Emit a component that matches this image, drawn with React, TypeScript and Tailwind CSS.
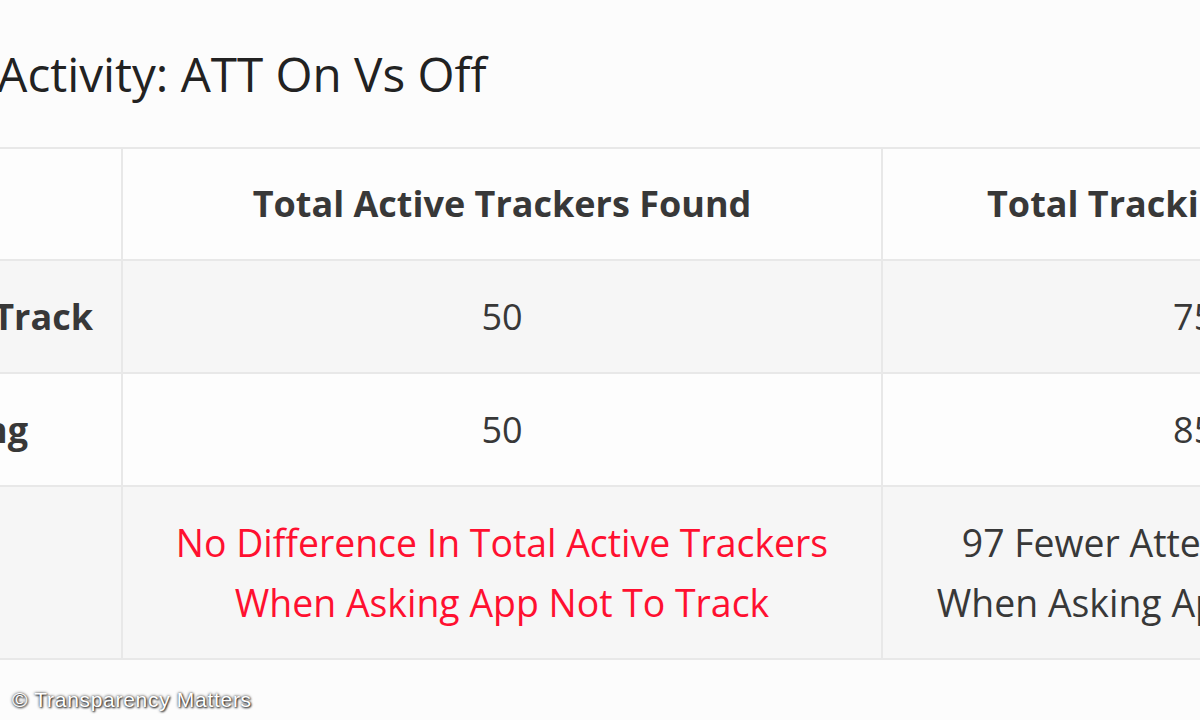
import React from "react";

type Row = {
  label: string;
  labelPad: string;
  active: string;
  attempts: string;
  shade: boolean;
};

const rows: Row[] = [
  { label: "Ask App Not To Track", labelPad: "pr-[28px]", active: "50", attempts: "753", shade: true },
  { label: "Allow Tracking", labelPad: "pr-[93px]", active: "50", attempts: "850", shade: false },
];

const App: React.FC = () => {
  return (
    <div
      className="w-[1200px] h-[720px] overflow-hidden bg-[#fcfcfc] text-[#383838] relative"
      style={{ fontFamily: '"Open Sans", "Noto Sans", sans-serif' }}
    >
      <h1 className="h-[147px] pt-[42px] -ml-[300px] pl-[98px] text-[47.6px] leading-[64px] whitespace-nowrap text-[#222]">
        Tracking Activity: ATT On Vs Off
      </h1>

      <table className="-ml-[300px] border-collapse table-fixed w-[1826px]">
        <colgroup>
          <col className="w-[422px]" />
          <col className="w-[760px]" />
          <col className="w-[644px]" />
        </colgroup>
        <thead>
          <tr className="h-[112px] bg-[#fdfdfd]">
            <th className="border-2 border-[#e8e8e8] border-l-0"></th>
            <th className="border-2 border-[#e8e8e8] text-[36px] font-bold text-center">
              Total Active Trackers Found
            </th>
            <th className="border-2 border-[#e8e8e8] text-[36px] font-bold text-center whitespace-nowrap">
              Total Tracking Attempts
            </th>
          </tr>
        </thead>
        <tbody>
          {rows.map((row) => (
            <tr
              key={row.label}
              className={row.shade ? "h-[113px] bg-[#f6f6f6]" : "h-[113px] bg-[#fdfdfd]"}
            >
              <td
                className={`border-2 border-[#e8e8e8] border-l-0 text-[36px] font-bold text-right whitespace-nowrap ${row.labelPad}`}
              >
                {row.label}
              </td>
              <td className="border-2 border-[#e8e8e8] text-[36px] text-center">{row.active}</td>
              <td className="border-2 border-[#e8e8e8] text-[36px] text-center">{row.attempts}</td>
            </tr>
          ))}
          <tr className="h-[173px] bg-[#f6f6f6]">
            <td className="border-2 border-[#e8e8e8] border-l-0"></td>
            <td className="border-2 border-[#e8e8e8] text-[37.4px] leading-[60px] text-center text-[#ff1030]">
              No Difference In Total Active Trackers
              <br />
              When Asking App Not To Track
            </td>
            <td className="border-2 border-[#e8e8e8] text-[37.4px] leading-[60px] text-center whitespace-nowrap">
              97 Fewer Attempts To Track
              <br />
              When Asking App Not To Track
            </td>
          </tr>
        </tbody>
      </table>

      <div
        className="absolute left-[12px] top-[684px] text-[21px] tracking-[0.7px] text-white whitespace-nowrap [text-shadow:0_0_3px_rgba(0,0,0,0.9),1px_1px_2px_rgba(0,0,0,0.8)]"
        style={{ fontFamily: '"Liberation Sans", Arial, sans-serif' }}
      >
        © Transparency Matters
      </div>
    </div>
  );
};

export default App;
